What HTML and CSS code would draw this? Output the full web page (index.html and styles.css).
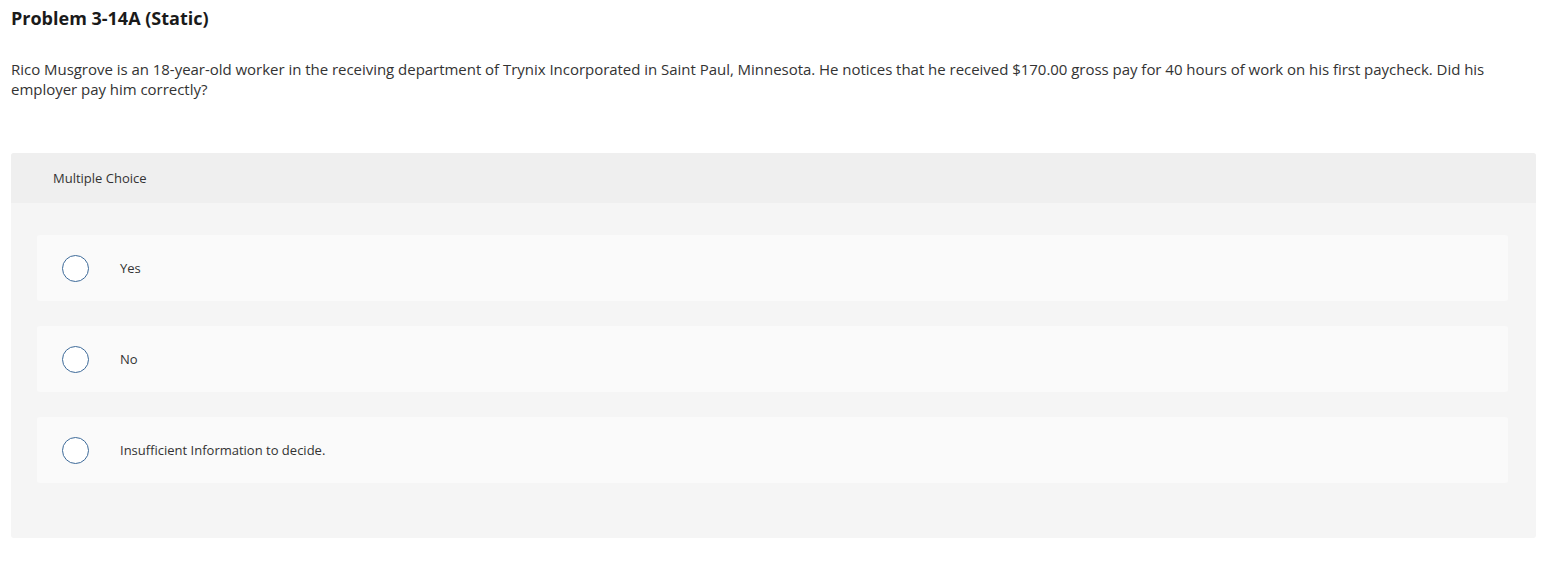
FILE: index.html
```html
<!DOCTYPE html>
<html>
<head>
<meta charset="utf-8">
<link rel="stylesheet" href="styles.css">
</head>
<body>
<div class="page">
  <h1 class="title">Problem 3-14A (Static)</h1>
  <p class="question">Rico Musgrove is an 18-year-old worker in the receiving department of Trynix Incorporated in Saint Paul, Minnesota. He notices that he received $170.00 gross pay for 40 hours of work on his first paycheck. Did his employer pay him correctly?</p>
  <div class="mc">
    <div class="mc-head">Multiple Choice</div>
    <div class="mc-body">
      <div class="option"><span class="radio"></span><span class="label">Yes</span></div>
      <div class="option"><span class="radio"></span><span class="label">No</span></div>
      <div class="option"><span class="radio"></span><span class="label">Insufficient Information to decide.</span></div>
    </div>
  </div>
</div>
</body>
</html>
```
FILE: styles.css
```css
html, body {
  margin: 0;
  padding: 0;
  background: #ffffff;
}
body {
  font-family: "Open Sans", "Liberation Sans", sans-serif;
  color: #222222;
}
.page {
  padding: 7px 10px 0 11px;
}
.title {
  margin: 0;
  font-size: 18px;
  font-weight: 700;
  line-height: 22px;
  color: #1a1a1a;
}
.question {
  margin: 30px 0 0 0;
  font-size: 15px;
  letter-spacing: -0.03px;
  line-height: 20px;
  color: #333333;
}
.mc {
  margin-top: 54px;
  background: #f5f5f5;
  border-radius: 3px;
  overflow: hidden;
}
.mc-head {
  background: #efefef;
  height: 50px;
  display: flex;
  align-items: center;
  padding-left: 42px;
  font-size: 13px;
  color: #333333;
}
.mc-body {
  display: flex;
  flex-direction: column;
  gap: 25px;
  padding: 32px 28px 55px 26px;
}
.option {
  background: #fafafa;
  border-radius: 3px;
  height: 66px;
  display: flex;
  align-items: center;
  padding-left: 25px;
}
.radio {
  width: 25px;
  height: 25px;
  border: 1px solid #3d6a99;
  border-radius: 50%;
  background: #ffffff;
  flex: none;
}
.label {
  margin-left: 31px;
  font-size: 13px;
  color: #333333;
}
```
